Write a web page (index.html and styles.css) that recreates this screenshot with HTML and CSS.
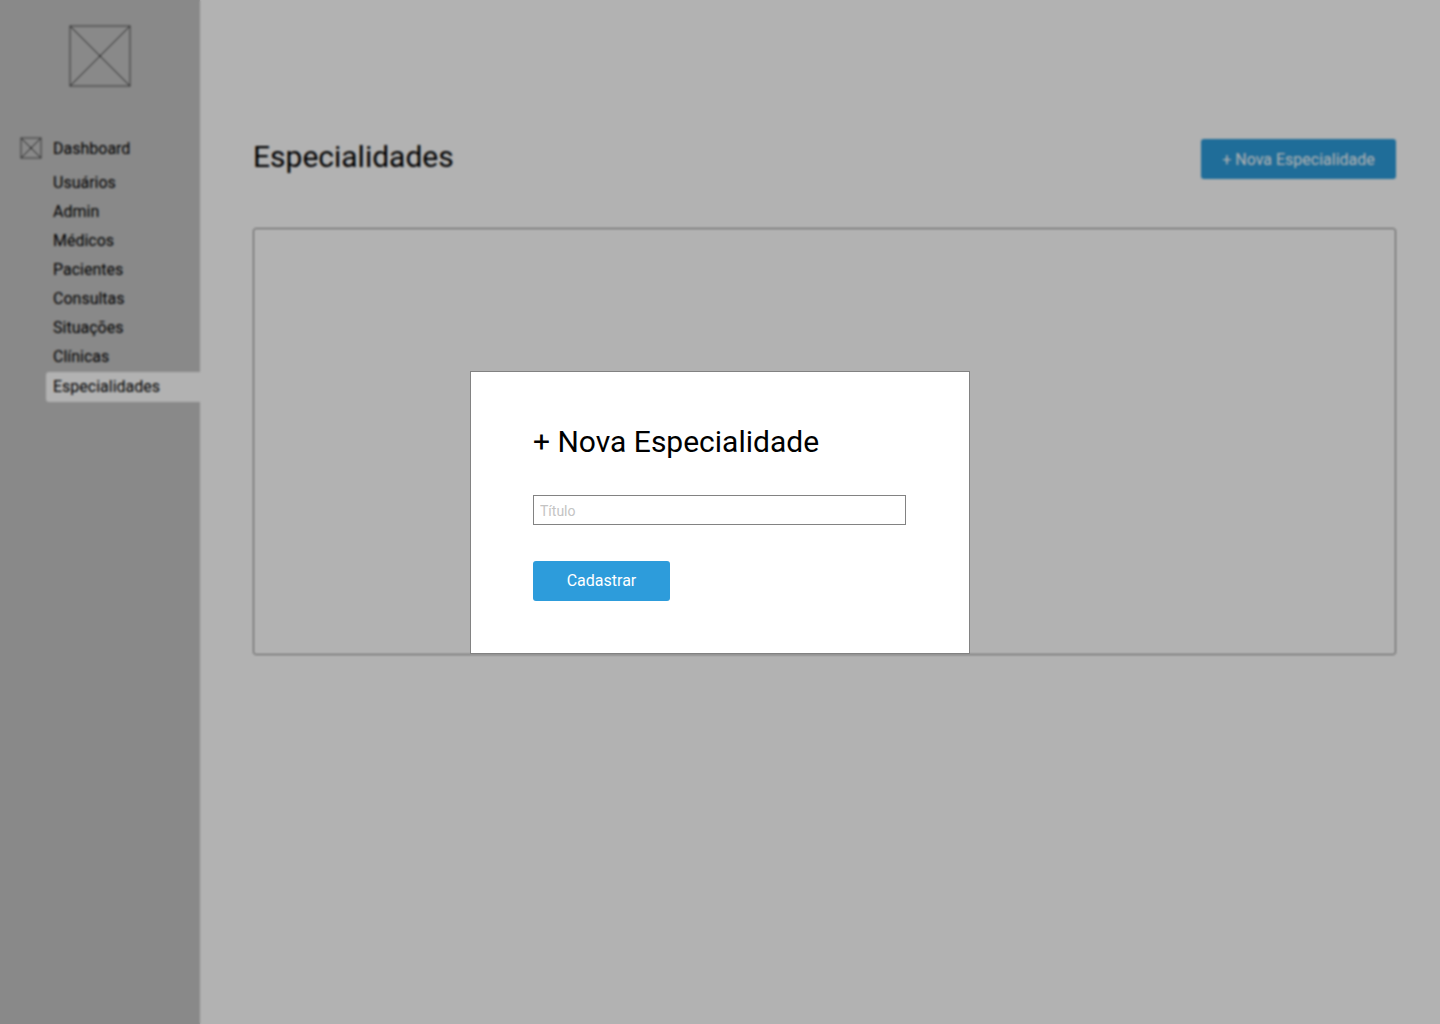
FILE: index.html
```html
<!DOCTYPE html>
<html lang="pt-BR">
<head>
  <meta charset="utf-8">
  <meta name="viewport" content="width=device-width, initial-scale=1">
  <title>Especialidades</title>
  <link rel="stylesheet" href="styles.css">
</head>
<body>
  <div class="app">
    <aside class="sidebar">
      <svg class="logo" viewBox="0 0 62 62" aria-hidden="true"><rect x="1" y="1" width="60" height="60"/><path d="M1 1l60 60M61 1L1 61"/></svg>
      <nav class="nav">
        <a class="nav-home" href="#">
          <svg class="nav-icon" viewBox="0 0 22 22" aria-hidden="true"><rect x="1" y="1" width="20" height="20"/><path d="M1 1l20 20M21 1L1 21"/></svg>
          Dashboard
        </a>
        <ul class="nav-list">
          <li><a class="nav-link" href="#">Usuários</a></li>
          <li><a class="nav-link" href="#">Admin</a></li>
          <li><a class="nav-link" href="#">Médicos</a></li>
          <li><a class="nav-link" href="#">Pacientes</a></li>
          <li><a class="nav-link" href="#">Consultas</a></li>
          <li><a class="nav-link" href="#">Situações</a></li>
          <li><a class="nav-link" href="#">Clínicas</a></li>
          <li><a class="nav-link nav-link-active" href="#">Especialidades</a></li>
        </ul>
      </nav>
    </aside>
    <main class="content">
      <header class="content-header">
        <h1 class="title">Especialidades</h1>
        <button class="button button-new" type="button">+ Nova Especialidade</button>
      </header>
      <section class="panel"></section>
    </main>
  </div>
  <div class="overlay">
    <form class="modal" role="dialog" aria-labelledby="modal-title">
      <h2 class="title" id="modal-title">+ Nova Especialidade</h2>
      <input class="field" type="text" placeholder="Título" aria-label="Título">
      <button class="button button-submit" type="button">Cadastrar</button>
    </form>
  </div>
</body>
</html>
```
FILE: styles.css
```css
* {
  box-sizing: border-box;
}

body {
  margin: 0;
  background: #fff;
  color: #000;
  font-family: Roboto, "Liberation Sans", sans-serif;
  font-size: 16px;
}

.app {
  display: flex;
  min-height: 100vh;
}

.sidebar {
  display: flex;
  flex-direction: column;
  flex: 0 0 200px;
  padding-top: 25px;
  background: #c4c4c4;
}

.logo,
.nav-icon {
  fill: none;
  stroke: #333;
  stroke-width: 1;
}

.logo rect,
.nav-icon rect {
  stroke: #4f4f4f;
}

.logo {
  align-self: center;
  width: 62px;
  height: 62px;
}

.nav-icon {
  flex: none;
  width: 22px;
  height: 22px;
}

.nav {
  margin-top: 46px;
}

.nav a {
  color: inherit;
  text-decoration: none;
}

.nav-home {
  display: flex;
  align-items: center;
  gap: 11px;
  height: 30px;
  padding-left: 20px;
}

.nav-list {
  margin: 5px 0 0;
  padding: 0 0 0 46px;
  list-style: none;
}

.nav-link {
  display: block;
  padding-left: 7px;
  line-height: 29px;
}

.nav-link-active {
  margin-top: 1px;
  border-radius: 3px 0 0 3px;
  background: #fff;
  line-height: 30px;
}

.content {
  flex: 1;
  padding: 139px 44px 44px 53px;
}

.content-header {
  display: flex;
  justify-content: space-between;
  align-items: flex-start;
}

.title {
  margin: 0;
  font-size: 30px;
  font-weight: 400;
  line-height: 35px;
}

.button {
  height: 40px;
  border: 0;
  border-radius: 3px;
  background: #2d9cdb;
  color: #fff;
  font: inherit;
  cursor: pointer;
}

.button-new {
  width: 195px;
}

.button-submit {
  width: 137px;
}

.panel {
  min-height: 427px;
  margin-top: 49px;
  border: 1px solid #828282;
  border-radius: 3px;
}

.overlay {
  position: fixed;
  inset: 0;
  display: flex;
  align-items: center;
  justify-content: center;
  background: rgba(0, 0, 0, 0.3);
  backdrop-filter: blur(1px);
}

.modal {
  display: flex;
  flex-direction: column;
  align-items: flex-start;
  gap: 36px;
  width: 500px;
  padding: 52px 63px 52px 62px;
  border: 1px solid #828282;
  background: #fff;
}

.field {
  width: 100%;
  height: 30px;
  padding: 2px 6px 0;
  border: 1px solid #828282;
  background: #fff;
  font: inherit;
  font-size: 14px;
}

.field::placeholder {
  color: #c4c4c4;
}
```
